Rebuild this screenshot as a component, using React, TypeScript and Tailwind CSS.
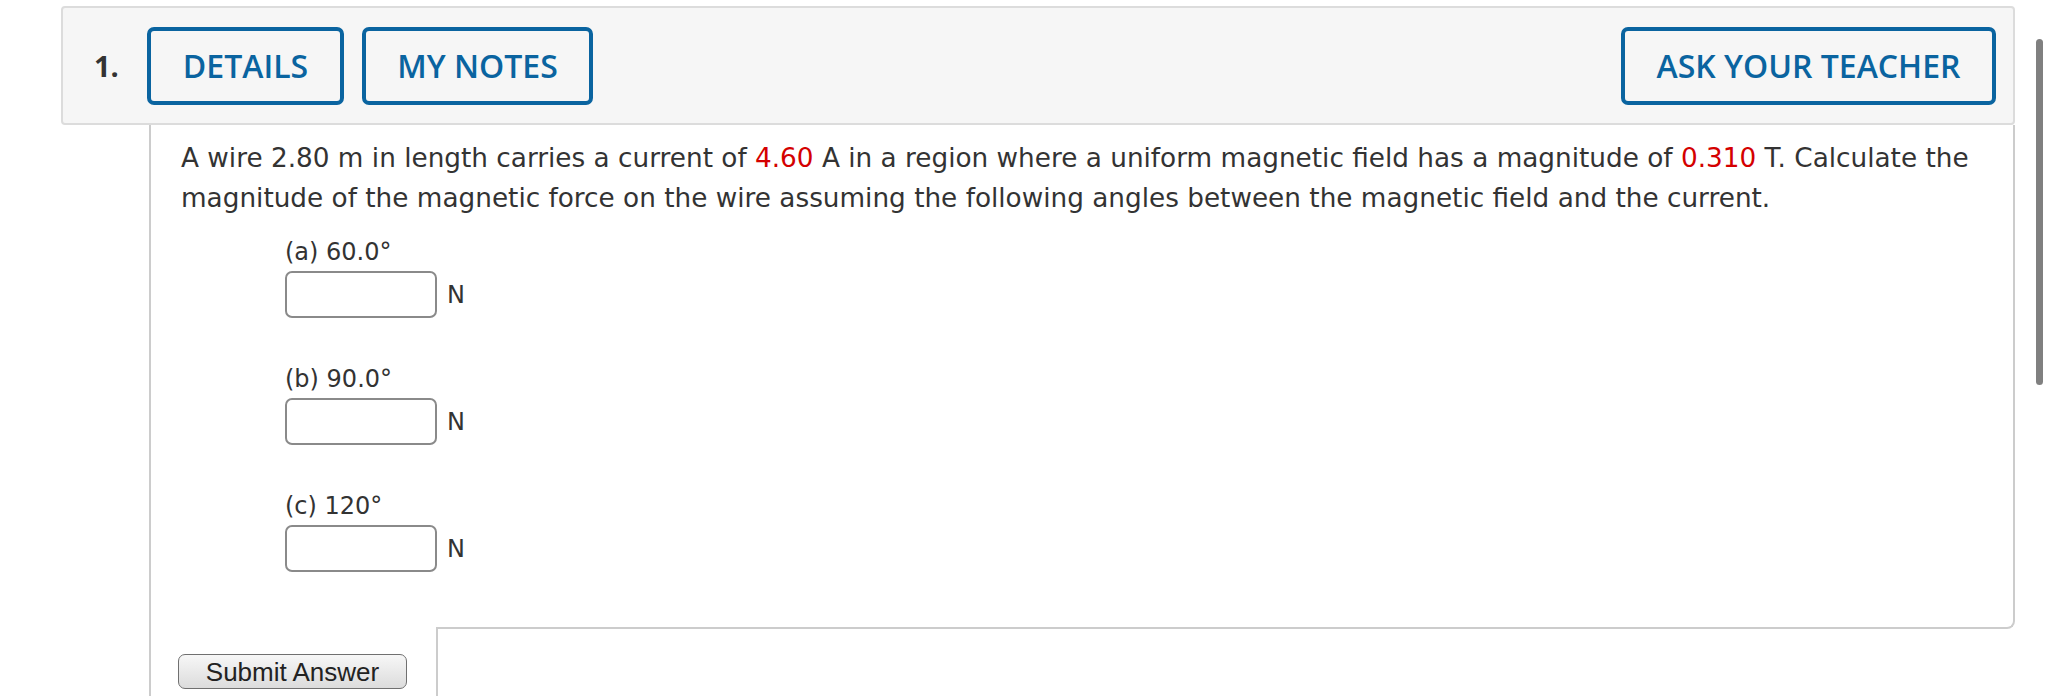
import React from "react";

const body = { fontFamily: '"DejaVu Sans", Verdana, sans-serif' };
const head = { fontFamily: '"Open Sans", sans-serif' };

function HeadButton({ label, w }: { label: string; w: string }) {
  return (
    <button
      className={`${w} h-[78px] border-[4px] border-[#0a64a0] rounded-[7px] bg-[#f6f6f6] text-[#0a64a0] text-[32px] font-semibold flex items-center justify-center leading-none`}
      style={head}
    >
      {label}
    </button>
  );
}

function Part({ label, last }: { label: string; last?: boolean }) {
  return (
    <div className={last ? "" : "mb-[48px]"}>
      <div className="text-[24px] leading-[26px] mb-[6px] text-[#333]" style={body}>
        {label}
      </div>
      <div className="flex items-center">
        <div className="w-[152px] h-[47px] border-2 border-[#8a8a8a] rounded-[7px] bg-white" />
        <span className="ml-[10px] text-[24px] text-[#333] leading-none" style={body}>
          N
        </span>
      </div>
    </div>
  );
}

export default function App() {
  return (
    <div className="relative w-[2048px] h-[696px] bg-white overflow-hidden">
      <div className="pt-[6px]">
        <div className="ml-[61px] w-[1954px] h-[119px] border-2 border-[#dcdcdc] rounded-[4px] bg-[#f6f6f6] flex items-center pl-[31px] pr-[17px]">
          <span className="w-[53px] text-[29px] font-bold text-[#333] leading-none" style={head}>
            1.
          </span>
          <HeadButton label="DETAILS" w="w-[197px]" />
          <div className="ml-[18px]">
            <HeadButton label="MY NOTES" w="w-[231px]" />
          </div>
          <div className="ml-auto">
            <HeadButton label="ASK YOUR TEACHER" w="w-[375px]" />
          </div>
        </div>
        <div className="ml-[149px] w-[1866px] border-l-2 border-[#cccccc]">
          <div className="border-r-2 border-[#cccccc] pl-[30px] pr-[30px] pt-[13px] pb-[47px]">
            <p className="text-[26.3px] leading-[40px] text-[#333]" style={body}>
              A wire 2.80 m in length carries a current of <span className="text-[#d40000]">4.60</span> A in a
              region where a uniform magnetic field has a magnitude of{" "}
              <span className="text-[#d40000]">0.310</span> T. Calculate the magnitude of the magnetic force on the
              wire assuming the following angles between the magnetic field and the current.
            </p>
            <div className="ml-[104px] mt-[21px]">
              <Part label="(a) 60.0°" />
              <Part label="(b) 90.0°" />
              <Part label="(c) 120°" last />
            </div>
          </div>
          <div className="flex">
            <div className="w-[285px]" />
            <div className="flex-1 h-[10px] border-b-2 border-r-2 border-[#cccccc] rounded-br-[8px]" />
          </div>
          <div className="flex">
            <div className="w-[285px] pl-[27px] pt-[25px]">
              <button
                className="w-[229px] h-[35px] border-[1.5px] border-[#707070] rounded-[7px] bg-gradient-to-b from-[#f7f7f7] to-[#dcdcdc] text-[26px] leading-none text-[#222] flex items-center justify-center"
                style={{ fontFamily: '"Liberation Sans", Arial, sans-serif' }}
              >
                Submit Answer
              </button>
            </div>
            <div className="flex-1 h-[80px] border-l-2 border-[#cccccc]" />
          </div>
        </div>
      </div>
      <div className="absolute left-[2036px] top-[39px] w-[7px] h-[346px] rounded-full bg-[#808080]" />
    </div>
  );
}
